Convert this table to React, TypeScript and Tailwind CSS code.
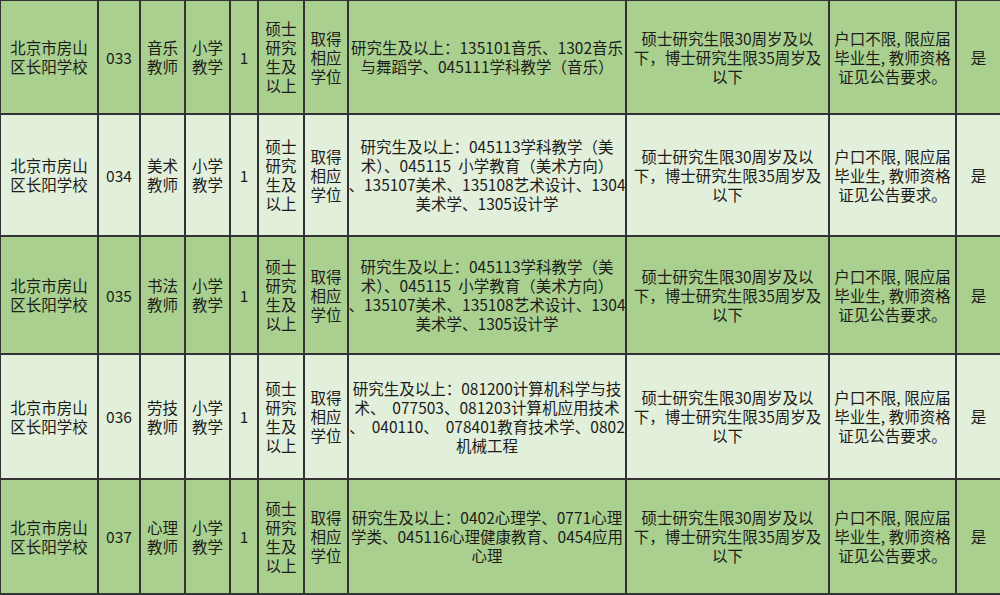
import React from "react";

type Row = {
  code: string;
  job: [string, string];
  major: string[];
};

const rows: Row[] = [
  {
    code: "033",
    job: ["音乐", "教师"],
    major: ["研究生及以上：135101音乐、1302音乐", "与舞蹈学、045111学科教学（音乐）"],
  },
  {
    code: "034",
    job: ["美术", "教师"],
    major: [
      "研究生及以上：045113学科教学（美",
      "术）、045115  小学教育（美术方向）",
      "、135107美术、135108艺术设计、1304",
      "美术学、1305设计学",
    ],
  },
  {
    code: "035",
    job: ["书法", "教师"],
    major: [
      "研究生及以上：045113学科教学（美",
      "术）、045115  小学教育（美术方向）",
      "、135107美术、135108艺术设计、1304",
      "美术学、1305设计学",
    ],
  },
  {
    code: "036",
    job: ["劳技", "教师"],
    major: [
      "研究生及以上：081200计算机科学与技",
      "术、  077503、081203计算机应用技术",
      "、  040110、  078401教育技术学、0802",
      "机械工程",
    ],
  },
  {
    code: "037",
    job: ["心理", "教师"],
    major: ["研究生及以上：0402心理学、0771心理", "学类、045116心理健康教育、0454应用", "心理"],
  },
];

function Lines({ lines }: { lines: string[] }) {
  return (
    <div className="text-center">
      {lines.map((l, i) => (
        <div key={i} className="whitespace-pre">
          {l}
        </div>
      ))}
    </div>
  );
}

export default function App() {
  return (
    <div
      className="w-[1000px] h-[595px] overflow-hidden bg-[#333333] pl-px pt-px pb-[2px] grid gap-[2px] grid-cols-[96px_40px_43px_43px_26px_44px_42px_276px_201px_125px_1fr] grid-rows-[112px_120px_116px_123px_113px] text-[15.5px] leading-[19px] text-[#1c1c1c]"
      style={{ fontFamily: '"Noto Sans CJK SC", "Noto Sans", sans-serif' }}
    >
      {rows.map((r, i) => {
        const bg = i % 2 === 0 ? "bg-[#a9d08e]" : "bg-[#e2efda]";
        const cell = `${bg} flex items-center justify-center text-center`;
        return (
          <React.Fragment key={r.code}>
            <div className={cell}>
              <Lines lines={["北京市房山", "区长阳学校"]} />
            </div>
            <div className={cell}>{r.code}</div>
            <div className={cell}>
              <Lines lines={r.job} />
            </div>
            <div className={cell}>
              <Lines lines={["小学", "教学"]} />
            </div>
            <div className={cell}>1</div>
            <div className={cell}>
              <Lines lines={["硕士", "研究", "生及", "以上"]} />
            </div>
            <div className={cell}>
              <Lines lines={["取得", "相应", "学位"]} />
            </div>
            <div className={cell}>
              <Lines lines={r.major} />
            </div>
            <div className={cell}>
              <Lines lines={["硕士研究生限30周岁及以", "下，博士研究生限35周岁及", "以下"]} />
            </div>
            <div className={cell}>
              <Lines lines={["户口不限, 限应届", "毕业生, 教师资格", "证见公告要求。"]} />
            </div>
            <div className={cell}>是</div>
          </React.Fragment>
        );
      })}
    </div>
  );
}
